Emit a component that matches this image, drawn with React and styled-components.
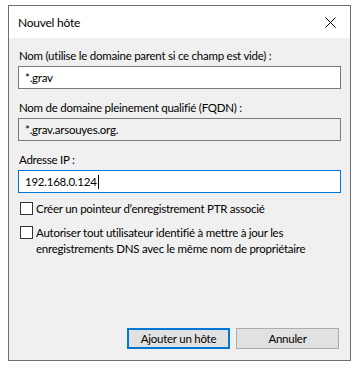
import React from "react";
import styled, { createGlobalStyle } from "styled-components";

const Global = createGlobalStyle`
  body {
    margin: 0;
    background: #ffffff;
    font-family: Lato, "Liberation Sans", sans-serif;
    font-size: 11.5px;
    letter-spacing: -0.25px;
    color: #000000;
  }
`;

const Page = styled.div`
  padding: 5px 0 0 8px;
`;

const Window = styled.div`
  box-sizing: border-box;
  width: 343px;
  height: 356px;
  border: 1px solid #6f6f6f;
  background: #f0f0f0;
  display: flex;
  flex-direction: column;
`;

const TitleBar = styled.div`
  height: 32px;
  background: #ffffff;
  display: flex;
  align-items: center;
  justify-content: space-between;
  padding: 0 9px;
  font-size: 12px;
`;

const Close = styled.svg`
  width: 11px;
  height: 11px;
  margin-right: 5px;
`;

const Body = styled.div`
  flex: 1;
  display: flex;
  flex-direction: column;
  padding: 10px 9px 11px 9px;
`;

const Label = styled.div`
  line-height: 15px;
  padding-left: 1px;
  margin-top: ${p => p.gap || 0}px;
  margin-bottom: 3px;
`;

const Field = styled.div`
  box-sizing: border-box;
  height: 23px;
  display: flex;
  align-items: center;
  padding-left: 6px;
  border: 1px solid ${p => (p.focused ? "#0078d7" : "#7a7a7a")};
  background: ${p => (p.readOnly ? "#f0f0f0" : "#ffffff")};
`;

const Caret = styled.span`
  display: inline-block;
  width: 1px;
  height: 14px;
  background: #000000;
  margin-left: 1px;
`;

const Check = styled.label`
  display: flex;
  align-items: flex-start;
  gap: 3px;
  padding-left: 2px;
  padding-right: 30px;
  line-height: 16px;
  margin-top: ${p => p.gap || 0}px;
`;

const Box = styled.span`
  flex: none;
  box-sizing: border-box;
  width: 13px;
  height: 13px;
  border: 1px solid #333333;
  background: #ffffff;
  margin-top: 1px;
`;

const Buttons = styled.div`
  margin-top: auto;
  display: flex;
  justify-content: flex-end;
  gap: 6px;
  padding-right: 2px;
`;

const Button = styled.button`
  box-sizing: border-box;
  width: 103px;
  height: 21px;
  font-family: inherit;
  font-size: 11.5px;
  letter-spacing: -0.25px;
  color: #000000;
  background: #e1e1e1;
  border: ${p => (p.primary ? "2px solid #0078d7" : "1px solid #adadad")};
  padding: 0;
`;

export default function App() {
  return (
    <Page>
      <Global />
      <Window>
        <TitleBar>
          <span>Nouvel hôte</span>
          <Close viewBox="0 0 11 11">
            <path d="M0.5 0.5L10.5 10.5M10.5 0.5L0.5 10.5" stroke="#000" strokeWidth="1" />
          </Close>
        </TitleBar>
        <Body>
          <Label>Nom (utilise le domaine parent si ce champ est vide) :</Label>
          <Field>*.grav</Field>
          <Label gap={11}>Nom de domaine pleinement qualifié (FQDN) :</Label>
          <Field readOnly>*.grav.arsouyes.org.</Field>
          <Label gap={11}>Adresse IP :</Label>
          <Field focused>
            192.168.0.124
            <Caret />
          </Field>
          <Check gap={8}>
            <Box />
            Créer un pointeur d’enregistrement PTR associé
          </Check>
          <Check gap={8}>
            <Box />
            Autoriser tout utilisateur identifié à mettre à jour les enregistrements DNS avec le même nom de propriétaire
          </Check>
          <Buttons>
            <Button primary>Ajouter un hôte</Button>
            <Button>Annuler</Button>
          </Buttons>
        </Body>
      </Window>
    </Page>
  );
}
